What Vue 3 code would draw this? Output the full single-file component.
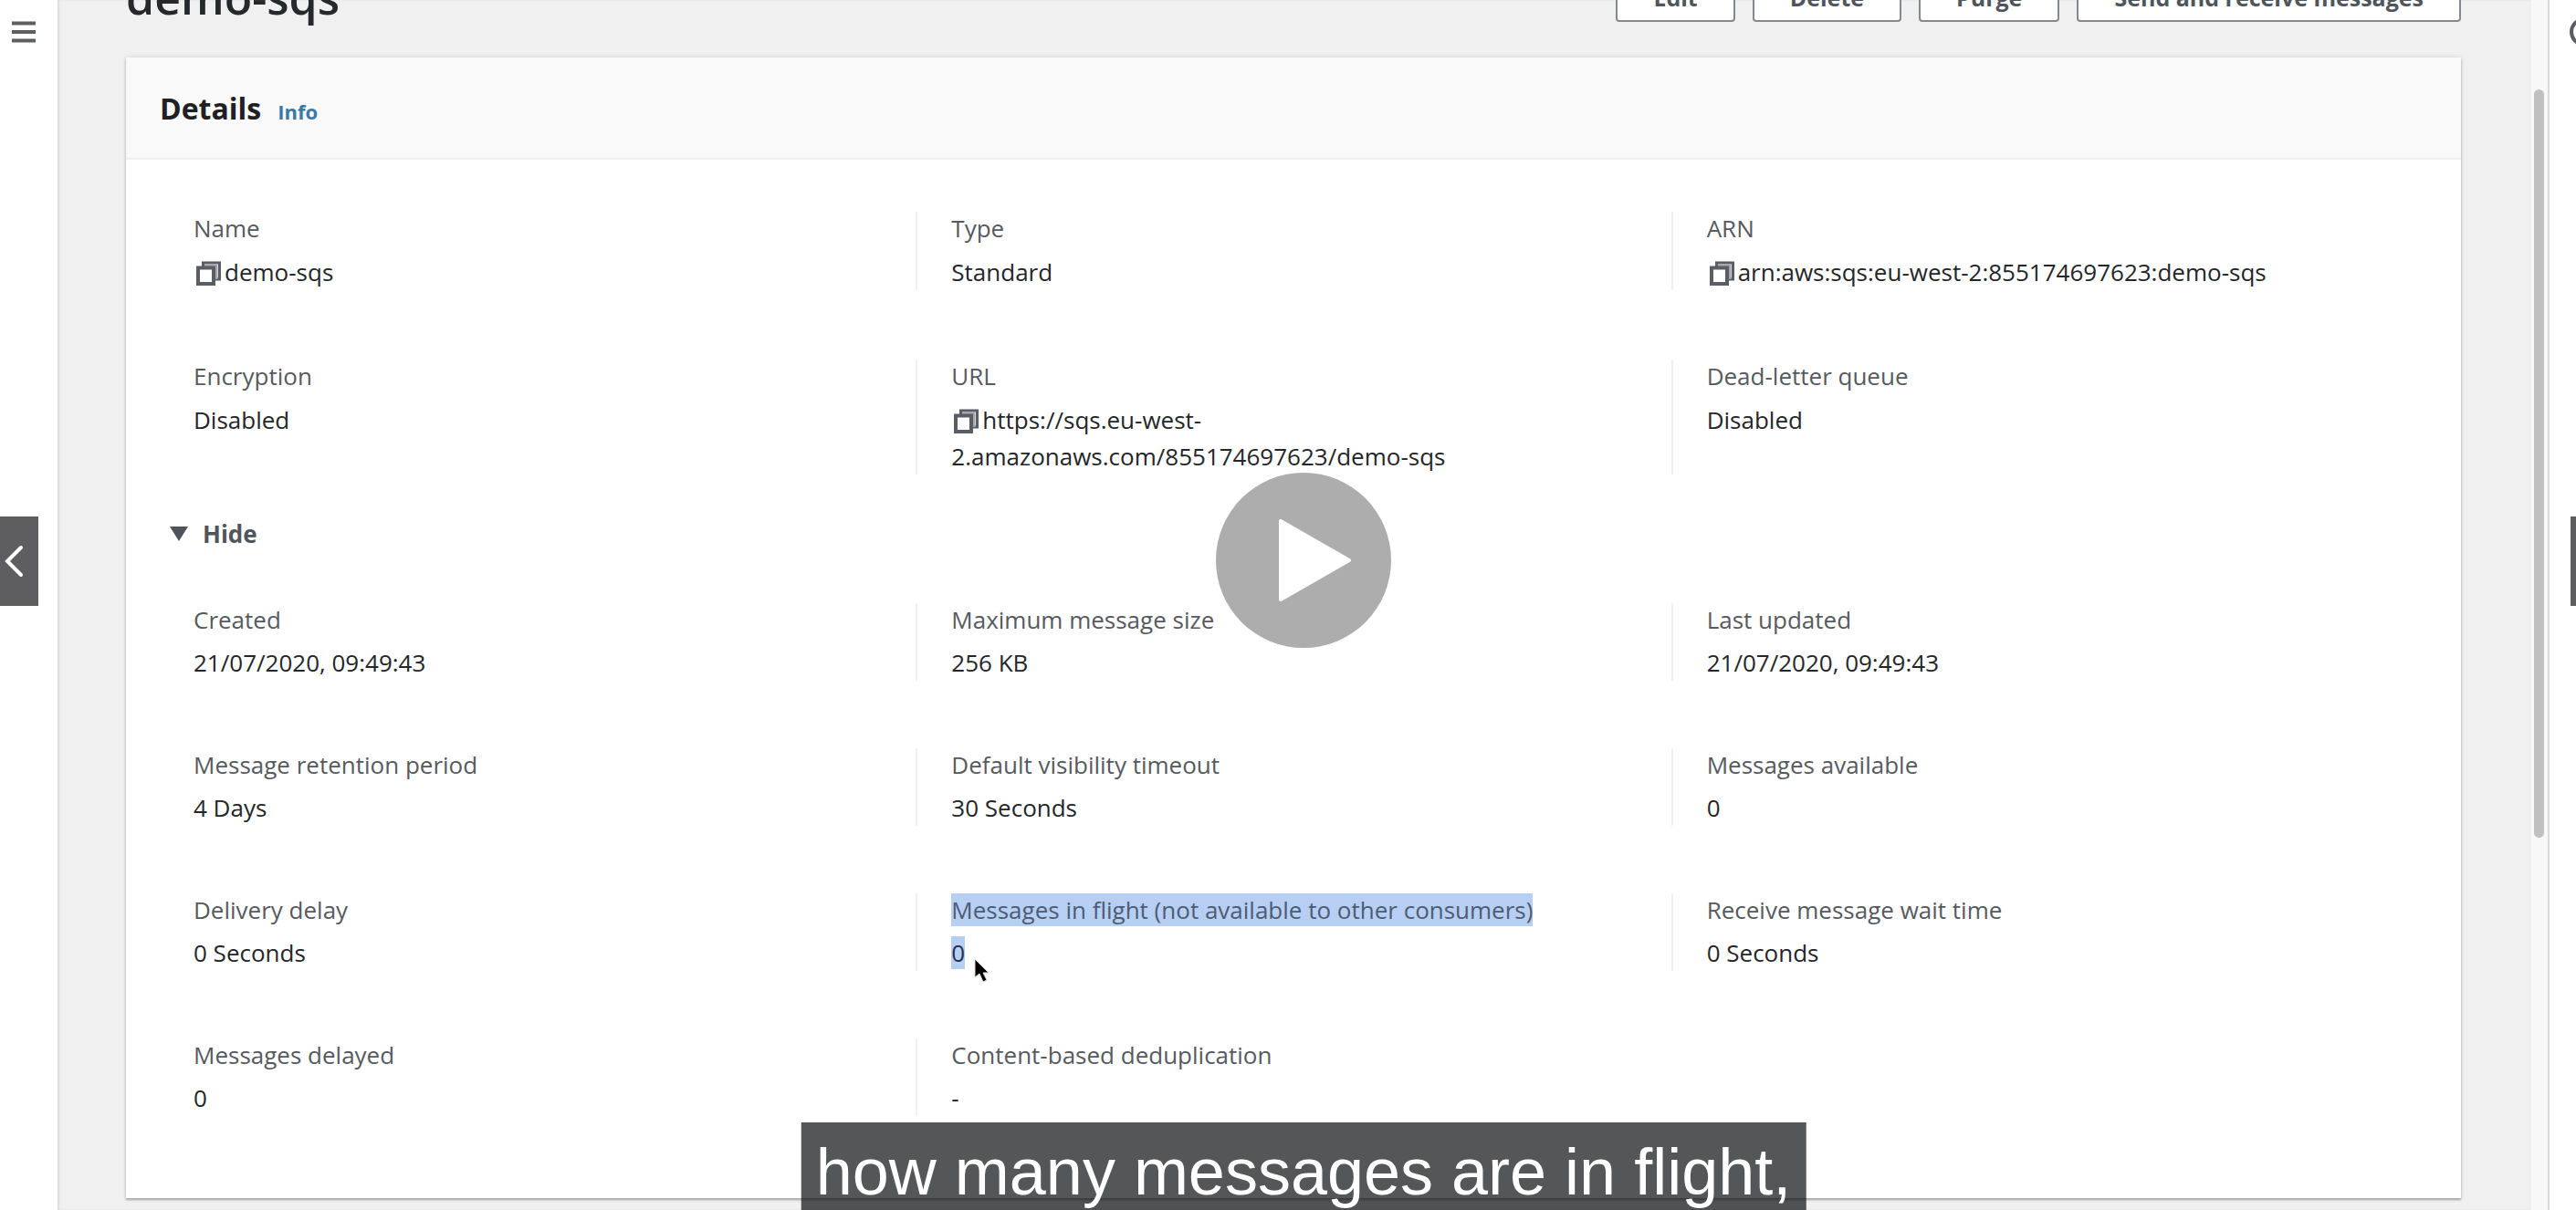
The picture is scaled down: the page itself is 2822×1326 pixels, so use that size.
<script setup>
import { ref } from 'vue'

const expanded = ref(true)

const actions = ['Edit', 'Delete', 'Purge', 'Send and receive messages']

const summary = [
  { label: 'Name', lines: ['demo-sqs'], copy: true },
  { label: 'Type', lines: ['Standard'] },
  { label: 'ARN', lines: ['arn:aws:sqs:eu-west-2:855174697623:demo-sqs'], copy: true },
  { label: 'Encryption', lines: ['Disabled'] },
  { label: 'URL', lines: ['https://sqs.eu-west-', '2.amazonaws.com/855174697623/demo-sqs'], copy: true },
  { label: 'Dead-letter queue', lines: ['Disabled'] },
]

const more = [
  { label: 'Created', lines: ['21/07/2020, 09:49:43'] },
  { label: 'Maximum message size', lines: ['256 KB'] },
  { label: 'Last updated', lines: ['21/07/2020, 09:49:43'] },
  { label: 'Message retention period', lines: ['4 Days'] },
  { label: 'Default visibility timeout', lines: ['30 Seconds'] },
  { label: 'Messages available', lines: ['0'] },
  { label: 'Delivery delay', lines: ['0 Seconds'] },
  { label: 'Messages in flight (not available to other consumers)', lines: ['0'], selected: true },
  { label: 'Receive message wait time', lines: ['0 Seconds'] },
  { label: 'Messages delayed', lines: ['0'] },
  { label: 'Content-based deduplication', lines: ['-'] },
]
</script>

<template>
  <div class="viewport">
    <div class="stage">
      <nav class="rail">
        <button class="menu" type="button" aria-label="Open navigation">
          <svg viewBox="0 0 28 24" width="28" height="24">
            <path d="M1 2.5h26M1 12h26M1 21.5h26" stroke="#5c6160" stroke-width="4" />
          </svg>
        </button>
      </nav>

      <main class="content">
        <div class="toolbar">
          <h1>demo-sqs</h1>
          <div class="actions">
            <button v-for="a in actions" :key="a" type="button">{{ a }}</button>
          </div>
        </div>

        <section class="card">
          <header>
            <h2>Details</h2>
            <a href="#info">Info</a>
          </header>

          <dl class="grid summary">
            <div v-for="f in summary" :key="f.label" class="field">
              <dt>{{ f.label }}</dt>
              <dd>
                <svg v-if="f.copy" class="copy" viewBox="0 0 34 28" width="34" height="28">
                  <path d="M10.5 6V2h18v18h-5" fill="none" stroke="#5a5e64" stroke-width="3" />
                  <path d="M12 5h13v15" fill="none" stroke="#a4a7ab" stroke-width="3" />
                  <path d="M5 7.5h17v17.5H5z" fill="#fff" stroke="#5a5e64" stroke-width="4" />
                </svg><template v-for="(l, i) in f.lines" :key="l"><br v-if="i" />{{ l }}</template>
              </dd>
            </div>
          </dl>

          <button class="toggle" type="button" :aria-expanded="expanded" @click="expanded = !expanded">
            <svg viewBox="0 0 20 16" width="20" height="16">
              <path d="M0 0h20L10 16z" fill="#50535c" />
            </svg>
            Hide
          </button>

          <dl v-if="expanded" class="grid more">
            <div v-for="f in more" :key="f.label" class="field" :class="{ selected: f.selected }">
              <dt><span>{{ f.label }}</span></dt>
              <dd>
                <span>{{ f.lines[0] }}</span>
                <svg v-if="f.selected" class="cursor" viewBox="0 0 18 28" width="18" height="28">
                  <path d="M2 1v20l5-4 4 9 4-2-4-8h6z" fill="#000" stroke="#ddd" stroke-width="1" />
                </svg>
              </dd>
            </div>
          </dl>
        </section>
      </main>

      <div class="track"><div class="thumb"></div></div>

      <aside class="tools">
        <svg viewBox="0 0 32 32" width="32" height="32">
          <circle cx="16" cy="16" r="14" fill="none" stroke="#5a5e62" stroke-width="4" />
          <path d="M16 14v9M16 8v3" stroke="#5a5e62" stroke-width="4" />
        </svg>
      </aside>

      <button class="nav prev" type="button" aria-label="Previous">
        <svg viewBox="0 0 24 40" width="24" height="40">
          <path d="M20 5L5 20l15 15" fill="none" stroke="#fff" stroke-width="4" stroke-linecap="round" />
        </svg>
      </button>
      <button class="nav next" type="button" aria-label="Next"></button>

      <button class="play" type="button" aria-label="Play">
        <svg viewBox="0 0 192 192" width="192" height="192">
          <path d="M71 53v86l75-43z" fill="#fff" stroke="#fff" stroke-width="4" stroke-linejoin="round" />
        </svg>
      </button>

      <p class="caption">how many messages are in flight,</p>
    </div>
  </div>
</template>

<style>
body {
  margin: 0;
  background: #fff;
}
</style>

<style scoped>
.viewport {
  overflow: hidden;
  min-height: 100vh;
}

.stage {
  position: relative;
  display: flex;
  width: calc(100% + 34px);
  min-height: 100vh;
  overflow: hidden;
  background: #fff;
  color: #242629;
  font-family: "Open Sans", "Noto Sans", sans-serif;
  font-size: 26px;
}

button {
  margin: 0;
  padding: 0;
  border: 0;
  background: none;
  color: inherit;
  font: inherit;
}

svg {
  display: block;
}

h1, h2, dl, dd, p {
  margin: 0;
}

.rail {
  flex: none;
  width: 63px;
}

.menu {
  display: block;
  margin: 23px 12px;
}

.content {
  flex: 1;
  min-width: 0;
  padding: 0 77px 9px 75px;
  background: #f0f0f0;
  box-shadow: inset 2px 0 2px #dcdcdc;
}

.toolbar {
  display: flex;
  align-items: center;
  justify-content: space-between;
  height: 54px;
  margin: -30px 0 39px;
}

h1 {
  color: #26282c;
  font-size: 50px;
  font-weight: 600;
  line-height: 54px;
}

.actions {
  display: flex;
  gap: 19px;
}

.actions button {
  box-sizing: border-box;
  height: 54px;
  padding: 0 39px;
  border: 2px solid #85888c;
  border-radius: 4px;
  background: #fff;
  color: #50545b;
  font-size: 25px;
  font-weight: 700;
}

.card {
  padding-bottom: 90px;
  background: #fff;
  box-shadow: 0 2px 2px #a8a8a8, 0 0 5px #d4d4d4;
}

.card header {
  display: flex;
  align-items: baseline;
  gap: 18px;
  box-sizing: border-box;
  height: 112px;
  padding: 32px 37px 0;
  border-bottom: 2px solid #efefef;
  background: #f9f9f9;
}

h2 {
  color: #1e2024;
  font-size: 32px;
  font-weight: 700;
  line-height: 48px;
}

.card a {
  color: #3a78a6;
  font-size: 22px;
  font-weight: 700;
  text-decoration: none;
}

.grid {
  display: grid;
  grid-template-columns: repeat(3, 1fr);
  row-gap: 74px;
  padding: 57px 38px 0;
}

.summary {
  row-gap: 76px;
}

.field {
  padding-left: 37px;
  border-left: 2px solid #f0f1f1;
}

.field:nth-child(3n + 1) {
  padding-left: 34px;
  border-left-color: transparent;
}

dt {
  margin-bottom: 10px;
  color: #565a5f;
  font-weight: 500;
  line-height: 36px;
}

.more dt {
  margin-bottom: 9px;
}

dd {
  position: relative;
  font-weight: 500;
  line-height: 40px;
}

.copy {
  display: inline-block;
  vertical-align: -6px;
}

.selected dt span {
  display: inline-block;
  background: #b7cff3;
  color: #4d5c74;
}

.selected dd span {
  background: #b7cff3;
  color: #22304a;
}

.cursor {
  position: absolute;
  top: 26px;
  left: 24px;
}

.toggle {
  display: flex;
  align-items: center;
  gap: 16px;
  margin: 45px 48px -1px;
  color: #50545b;
  font-weight: 700;
  line-height: 40px;
}

.track {
  flex: none;
  box-sizing: border-box;
  width: 20px;
  padding: 98px 4px 0 3px;
  border-right: 2px solid #dadada;
  background: #f8f8f8;
}

.thumb {
  height: 820px;
  border-radius: 6px;
  background: #c0c0c0;
}

.tools {
  flex: none;
  width: 63px;
}

.tools svg {
  margin: 19px 0 0 22px;
}

.nav {
  position: absolute;
  top: 566px;
  width: 42px;
  height: 98px;
  background: rgba(26, 26, 28, 0.7);
}

.prev {
  left: 0;
}

.prev svg {
  margin-left: 3px;
}

.next {
  right: -2px;
}

.play {
  position: absolute;
  top: 518px;
  left: 50%;
  margin-left: -96px;
  border-radius: 50%;
  background: #adadad;
}

.caption {
  position: absolute;
  bottom: 0;
  left: 50%;
  padding: 13px 16px 0;
  background: rgba(8, 10, 12, 0.69);
  color: #fff;
  font-family: "Liberation Sans", sans-serif;
  font-size: 72px;
  line-height: 83px;
  white-space: nowrap;
  transform: translateX(-50%);
}
</style>
